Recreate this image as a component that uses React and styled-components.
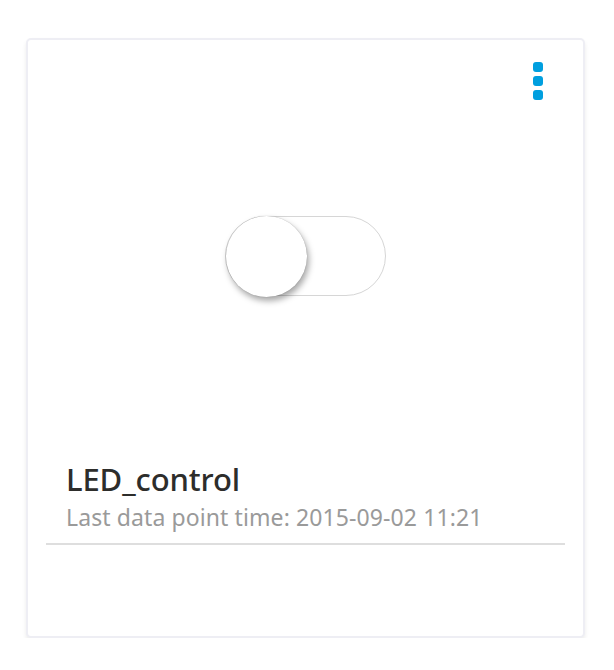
import React from "react";
import styled, { createGlobalStyle } from "styled-components";

const Global = createGlobalStyle`
  body {
    margin: 0;
    background: #fff;
    font-family: "Noto Sans", "Open Sans", sans-serif;
  }
`;

const Page = styled.div`
  padding: 38px 0 0 26px;
`;

const Card = styled.div`
  box-sizing: border-box;
  width: 559px;
  height: 600px;
  background: #fff;
  border: 2px solid #eeeef4;
  border-radius: 5px;
  box-shadow: 0 3px 4px rgba(0, 0, 0, 0.08);
  padding: 22px 18px 0;
  display: flex;
  flex-direction: column;
`;

const Header = styled.div`
  display: flex;
  justify-content: flex-end;
  padding-right: 22px;
  height: 38px;
`;

const Dots = styled.div`
  display: flex;
  flex-direction: column;
  gap: 4px;
  cursor: pointer;
`;

const Dot = styled.span`
  width: 10px;
  height: 10px;
  border-radius: 3px;
  background: #009fdf;
`;

const ToggleArea = styled.div`
  display: flex;
  justify-content: center;
  margin-top: 116px;
  height: 80px;
`;

const Track = styled.div`
  position: relative;
  box-sizing: border-box;
  width: 161px;
  height: 80px;
  border: 1.5px solid #d6d6d6;
  border-radius: 40px;
  background: #fff;
`;

const Knob = styled.div`
  position: absolute;
  top: -1.5px;
  left: ${(p) => (p.on ? "79px" : "-0.5px")};
  width: 81px;
  height: 81px;
  border-radius: 50%;
  background: #fff;
  box-shadow: 2px 4px 6px rgba(0, 0, 0, 0.35), 0 0 1px rgba(0, 0, 0, 0.3);
`;

const Info = styled.div`
  margin-top: 163px;
  padding: 0 20px;
`;

const Title = styled.div`
  font-size: 31px;
  font-weight: 500;
  color: #2d2d2b;
  line-height: 40px;
  letter-spacing: -0.1px;
`;

const Subtitle = styled.div`
  font-size: 23px;
  color: #9a9a9a;
  line-height: 32px;
  margin-top: 2px;
  letter-spacing: 0.1px;
`;

const Divider = styled.div`
  height: 2px;
  background: #dedede;
  margin-top: 10px;
`;

export default function App() {
  const [on, setOn] = React.useState(false);
  return (
    <Page>
      <Global />
      <Card>
        <Header>
          <Dots>
            <Dot />
            <Dot />
            <Dot />
          </Dots>
        </Header>
        <ToggleArea>
          <Track onClick={() => setOn(!on)}>
            <Knob on={on ? 1 : 0} />
          </Track>
        </ToggleArea>
        <Info>
          <Title>LED_control</Title>
          <Subtitle>Last data point time: 2015-09-02 11:21</Subtitle>
        </Info>
        <Divider />
      </Card>
    </Page>
  );
}
